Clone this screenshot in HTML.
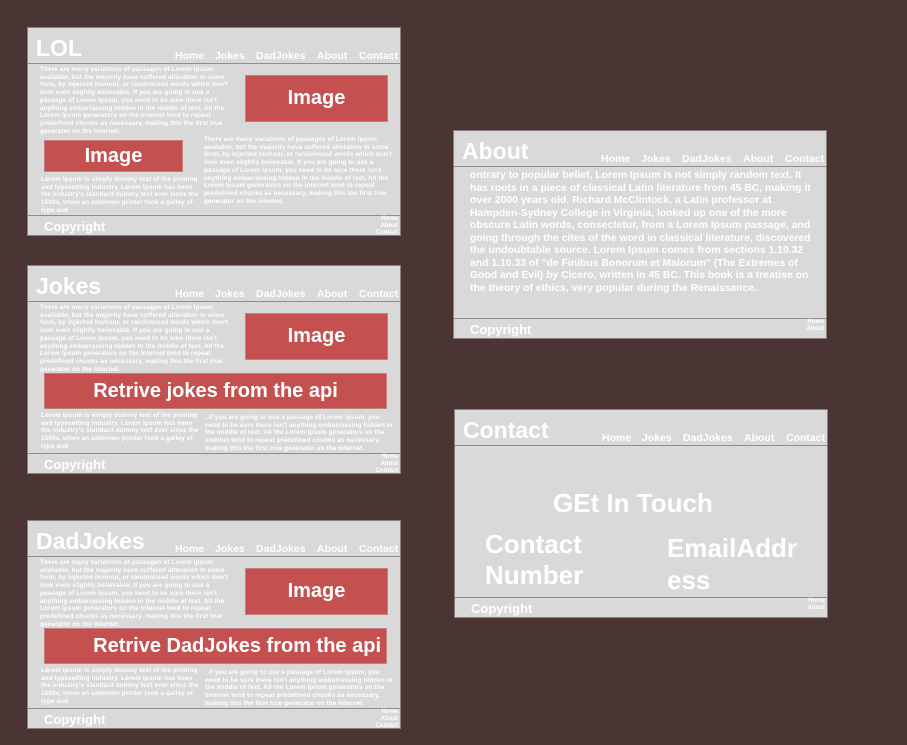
<!DOCTYPE html>
<html><head><meta charset="utf-8"><style>
*{margin:0;padding:0;box-sizing:border-box}
body{width:907px;height:745px;background:#4b3434;position:relative;overflow:hidden;font-family:"Liberation Sans",sans-serif;font-weight:bold;color:#fff}
.f{position:absolute;width:374px;height:209px;background:#d9d9d9;border:1px solid #8a7f7f;overflow:hidden}
.a{position:absolute}
.t{position:absolute;left:8px;top:7px;font-size:23px;line-height:26px}
.nav{position:absolute;top:22px;font-size:10.5px;line-height:12px}
.hl{position:absolute;left:0;right:0;top:35px;height:1px;background:#978a8a}
.fl{position:absolute;left:0;right:0;top:187px;height:1px;background:#978a8a}
.cp{position:absolute;left:16px;top:191px;font-size:13px;line-height:16px}
.fn{position:absolute;right:2px;top:188px;font-size:6px;line-height:7px;text-align:right}
.s{position:absolute;font-size:6.3px;line-height:7.7px;width:190px;letter-spacing:0.15px}
.r{position:absolute;background:#c55050;border:1px solid #c08080;text-align:center;font-size:20px}
</style></head><body>

<!-- LOL -->
<div class="f" style="left:27px;top:27px">
<div class="t">LOL</div>
<div class="nav" style="left:147px">Home</div><div class="nav" style="left:187px">Jokes</div><div class="nav" style="left:228px">DadJokes</div><div class="nav" style="left:289px">About</div><div class="nav" style="left:331px">Contact</div>
<div class="hl"></div>
<div class="s" style="left:12px;top:38px">There are many variations of passages of Lorem Ipsum available, but the majority have suffered alteration in some form, by injected humour, or randomised words which don't look even slightly believable. If you are going to use a passage of Lorem Ipsum, you need to be sure there isn't anything embarrassing hidden in the middle of text. All the Lorem Ipsum generators on the Internet tend to repeat predefined chunks as necessary, making this the first true generator on the Internet.</div>
<div class="r" style="left:217px;top:47px;width:143px;height:47px;line-height:45px">Image</div>
<div class="r" style="left:16px;top:112px;width:139px;height:32px;line-height:30px">Image</div>
<div class="s" style="left:176px;top:108px">There are many variations of passages of Lorem Ipsum available, but the majority have suffered alteration in some form, by injected humour, or randomised words which don't look even slightly believable. If you are going to use a passage of Lorem Ipsum, you need to be sure there isn't anything embarrassing hidden in the middle of text. All the Lorem Ipsum generators on the Internet tend to repeat predefined chunks as necessary, making this the first true generator on the Internet.</div>
<div class="s" style="left:13px;top:148px;width:158px">Lorem Ipsum is simply dummy text of the printing and typesetting industry. Lorem Ipsum has been the industry's standard dummy text ever since the 1500s, when an unknown printer took a galley of type and</div>
<div class="fl"></div><div class="cp">Copyright</div><div class="fn">Home<br>About<br>Contact</div>
</div>

<!-- Jokes -->
<div class="f" style="left:27px;top:265px">
<div class="t">Jokes</div>
<div class="nav" style="left:147px">Home</div><div class="nav" style="left:187px">Jokes</div><div class="nav" style="left:228px">DadJokes</div><div class="nav" style="left:289px">About</div><div class="nav" style="left:331px">Contact</div>
<div class="hl"></div>
<div class="s" style="left:12px;top:38px">There are many variations of passages of Lorem Ipsum available, but the majority have suffered alteration in some form, by injected humour, or randomised words which don't look even slightly believable. If you are going to use a passage of Lorem Ipsum, you need to be sure there isn't anything embarrassing hidden in the middle of text. All the Lorem Ipsum generators on the Internet tend to repeat predefined chunks as necessary, making this the first true generator on the Internet.</div>
<div class="r" style="left:217px;top:47px;width:143px;height:47px;line-height:45px">Image</div>
<div class="r" style="left:16px;top:107px;width:343px;height:36px;line-height:34px">Retrive jokes from the api</div>
<div class="s" style="left:13px;top:146px;width:158px">Lorem Ipsum is simply dummy text of the printing and typesetting industry. Lorem Ipsum has been the industry's standard dummy text ever since the 1500s, when an unknown printer took a galley of type and</div>
<div class="s" style="left:177px;top:148px">. If you are going to use a passage of Lorem Ipsum, you need to be sure there isn't anything embarrassing hidden in the middle of text. All the Lorem Ipsum generators on the Internet tend to repeat predefined chunks as necessary, making this the first true generator on the Internet.</div>
<div class="fl"></div><div class="cp">Copyright</div><div class="fn">Home<br>About<br>Contact</div>
</div>

<!-- DadJokes -->
<div class="f" style="left:27px;top:520px">
<div class="t">DadJokes</div>
<div class="nav" style="left:147px">Home</div><div class="nav" style="left:187px">Jokes</div><div class="nav" style="left:228px">DadJokes</div><div class="nav" style="left:289px">About</div><div class="nav" style="left:331px">Contact</div>
<div class="hl"></div>
<div class="s" style="left:12px;top:38px">There are many variations of passages of Lorem Ipsum available, but the majority have suffered alteration in some form, by injected humour, or randomised words which don't look even slightly believable. If you are going to use a passage of Lorem Ipsum, you need to be sure there isn't anything embarrassing hidden in the middle of text. All the Lorem Ipsum generators on the Internet tend to repeat predefined chunks as necessary, making this the first true generator on the Internet.</div>
<div class="r" style="left:217px;top:47px;width:143px;height:47px;line-height:45px">Image</div>
<div class="r" style="left:16px;top:107px;width:343px;height:36px;line-height:34px;text-align:right;padding-right:5px">Retrive DadJokes from the api</div>
<div class="s" style="left:13px;top:146px;width:158px">Lorem Ipsum is simply dummy text of the printing and typesetting industry. Lorem Ipsum has been the industry's standard dummy text ever since the 1500s, when an unknown printer took a galley of type and</div>
<div class="s" style="left:177px;top:148px">. If you are going to use a passage of Lorem Ipsum, you need to be sure there isn't anything embarrassing hidden in the middle of text. All the Lorem Ipsum generators on the Internet tend to repeat predefined chunks as necessary, making this the first true generator on the Internet.</div>
<div class="fl"></div><div class="cp">Copyright</div><div class="fn">Home<br>About<br>Contact</div>
</div>

<!-- About -->
<div class="f" style="left:453px;top:130px">
<div class="t">About</div>
<div class="nav" style="left:147px">Home</div><div class="nav" style="left:187px">Jokes</div><div class="nav" style="left:228px">DadJokes</div><div class="nav" style="left:289px">About</div><div class="nav" style="left:331px">Contact</div>
<div class="hl"></div>
<div class="a" style="left:16px;top:39px;width:345px;font-size:10.4px;line-height:12.5px">ontrary to popular belief, Lorem Ipsum is not simply random text. It has roots in a piece of classical Latin literature from 45 BC, making it over 2000 years old. Richard McClintock, a Latin professor at Hampden-Sydney College in Virginia, looked up one of the more obscure Latin words, consectetur, from a Lorem Ipsum passage, and going through the cites of the word in classical literature, discovered the undoubtable source. Lorem Ipsum comes from sections 1.10.32 and 1.10.33 of "de Finibus Bonorum et Malorum" (The Extremes of Good and Evil) by Cicero, written in 45 BC. This book is a treatise on the theory of ethics, very popular during the Renaissance.</div>
<div class="fl"></div><div class="cp">Copyright</div><div class="fn">Home<br>About</div>
</div>

<!-- Contact -->
<div class="f" style="left:454px;top:409px">
<div class="t">Contact</div>
<div class="nav" style="left:147px">Home</div><div class="nav" style="left:187px">Jokes</div><div class="nav" style="left:228px">DadJokes</div><div class="nav" style="left:289px">About</div><div class="nav" style="left:331px">Contact</div>
<div class="hl"></div>
<div class="a" style="left:98px;top:78px;font-size:26px;line-height:30px">GEt In Touch</div>
<div class="a" style="left:30px;top:119px;font-size:26px;line-height:31px">Contact<br>Number</div>
<div class="a" style="left:212px;top:122px;font-size:26px;line-height:32px">EmailAddr<br>ess</div>
<div class="fl"></div><div class="cp">Copyright</div><div class="fn">Home<br>About</div>
</div>

</body></html>
